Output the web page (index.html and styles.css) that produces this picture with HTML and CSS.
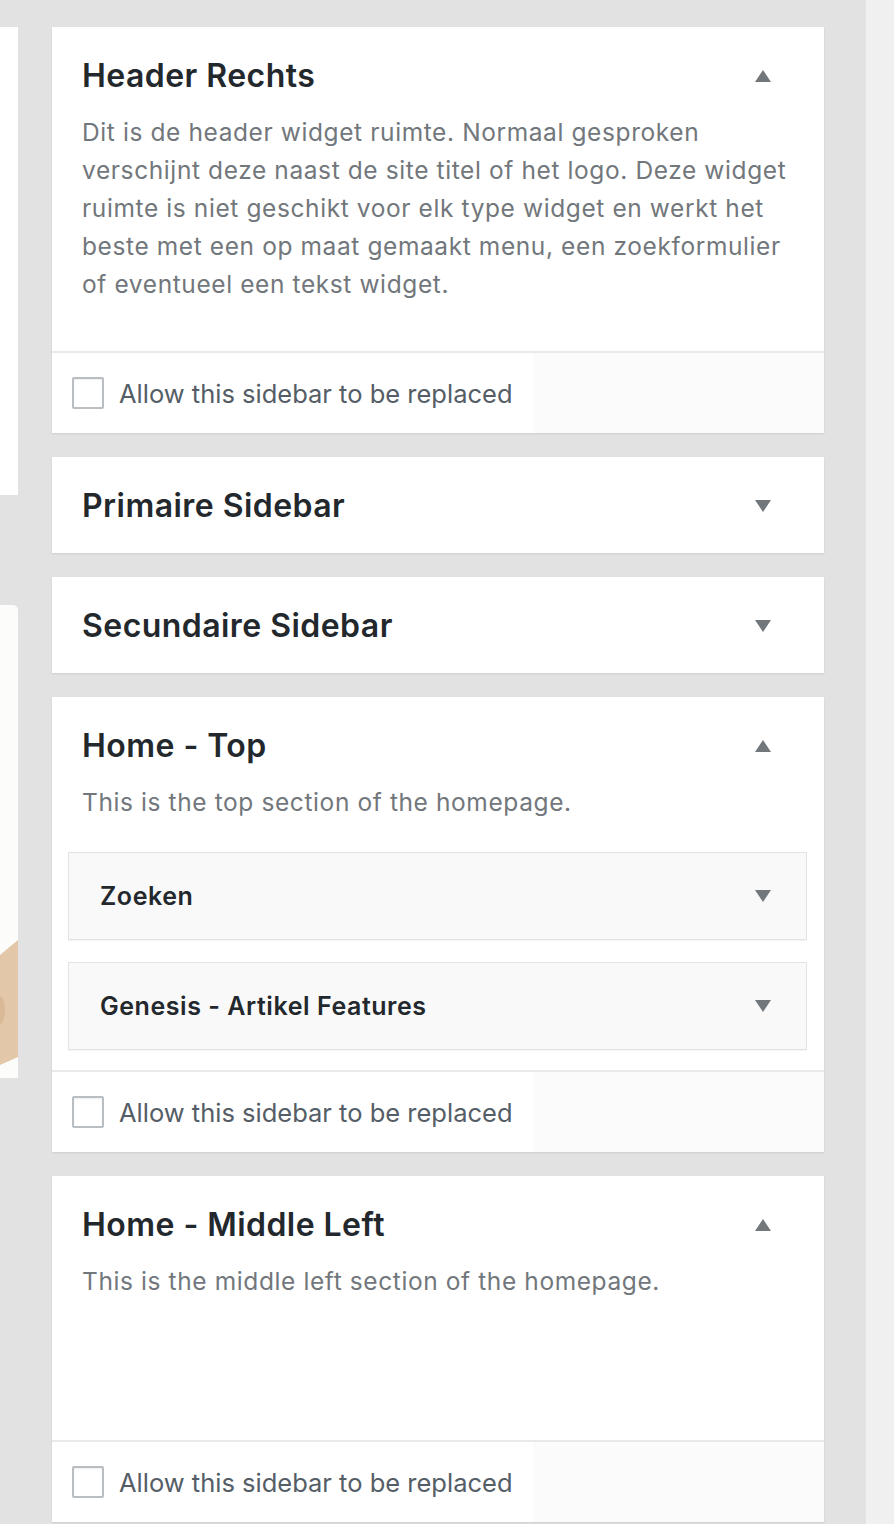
FILE: index.html
```html
<!DOCTYPE html>
<html lang="nl">
<head>
<meta charset="utf-8">
<title>Widgets</title>
<link rel="stylesheet" href="styles.css">
</head>
<body>
<div class="page">
  <aside class="left">
    <div class="lcard lcard-1"></div>
    <div class="lcard lcard-2">
      <svg class="preview" width="18" height="473" viewBox="0 0 18 473" aria-hidden="true">
        <polygon points="18,335 0,350 0,460 18,452" fill="#e2c8a8"/>
        <ellipse cx="0" cy="405" rx="5" ry="14" fill="#d9b996"/>
      </svg>
    </div>
  </aside>

  <main class="sidebars">
    <section class="sidebar">
      <div class="sb-head">
        <h2 class="sb-title">Header Rechts</h2>
        <span class="arrow arrow-up"></span>
      </div>
      <p class="sb-desc">Dit is de header widget ruimte. Normaal gesproken verschijnt deze naast de site titel of het logo. Deze widget ruimte is niet geschikt voor elk type widget en werkt het beste met een op maat gemaakt menu, een zoekformulier of eventueel een tekst widget.</p>
      <div class="sb-body sb-body-short"></div>
      <div class="sb-foot">
        <label class="replace"><span class="cb"></span>Allow this sidebar to be replaced</label>
      </div>
    </section>

    <section class="sidebar">
      <div class="sb-head sb-head-closed">
        <h2 class="sb-title">Primaire Sidebar</h2>
        <span class="arrow arrow-down"></span>
      </div>
    </section>

    <section class="sidebar">
      <div class="sb-head sb-head-closed">
        <h2 class="sb-title">Secundaire Sidebar</h2>
        <span class="arrow arrow-down"></span>
      </div>
    </section>

    <section class="sidebar">
      <div class="sb-head">
        <h2 class="sb-title">Home - Top</h2>
        <span class="arrow arrow-up"></span>
      </div>
      <p class="sb-desc">This is the top section of the homepage.</p>
      <div class="sb-body sb-body-widgets">
        <div class="widget">
          <h3 class="widget-title">Zoeken</h3>
          <span class="arrow arrow-down"></span>
        </div>
        <div class="widget">
          <h3 class="widget-title">Genesis - Artikel Features</h3>
          <span class="arrow arrow-down"></span>
        </div>
      </div>
      <div class="sb-foot">
        <label class="replace"><span class="cb"></span>Allow this sidebar to be replaced</label>
      </div>
    </section>

    <section class="sidebar">
      <div class="sb-head">
        <h2 class="sb-title">Home - Middle Left</h2>
        <span class="arrow arrow-up"></span>
      </div>
      <p class="sb-desc">This is the middle left section of the homepage.</p>
      <div class="sb-body sb-body-tall"></div>
      <div class="sb-foot">
        <label class="replace"><span class="cb"></span>Allow this sidebar to be replaced</label>
      </div>
    </section>
  </main>

  <div class="gutter"></div>
  <div class="strip"></div>
</div>
</body>
</html>
```

FILE: styles.css
```css
* { box-sizing: border-box; }

html, body {
  margin: 0;
  padding: 0;
  background: #e2e2e2;
  height: 1524px;
  overflow: hidden;
}

body {
  font-family: Inter, "Noto Sans", "DejaVu Sans", sans-serif;
}

.page {
  display: flex;
  align-items: flex-start;
  height: 1524px;
}

/* left column with theme previews */
.left {
  width: 18px;
  flex: 0 0 18px;
  display: flex;
  flex-direction: column;
  padding-top: 27px;
}

.lcard {
  background: #ffffff;
}

.lcard-1 {
  height: 468px;
}

.lcard-2 {
  margin-top: 110px;
  height: 473px;
  background: #fcfdfb;
  border-top-right-radius: 5px;
  overflow: hidden;
}

.preview {
  display: block;
}

/* main sidebar column */
.sidebars {
  width: 772px;
  flex: 0 0 772px;
  margin-left: 34px;
  padding-top: 27px;
  display: flex;
  flex-direction: column;
  gap: 24px;
}

.sidebar {
  background: #ffffff;
  box-shadow: 0 1px 2px rgba(0, 0, 0, 0.09);
}

.sb-head {
  display: flex;
  align-items: center;
  justify-content: space-between;
  padding: 31px 53px 0 30px;
}

.sb-head .arrow {
  margin-top: -1px;
}

.sb-head-closed {
  padding-bottom: 29px;
}

.sb-title {
  margin: 0;
  font-size: 32px;
  line-height: 36px;
  font-weight: 600;
  color: #23282d;
  letter-spacing: 0.45px;
}

.arrow {
  width: 0;
  height: 0;
  border-left: 8px solid transparent;
  border-right: 8px solid transparent;
  flex: 0 0 auto;
}

.arrow-up {
  border-bottom: 12px solid #72777c;
}

.arrow-down {
  border-top: 12px solid #72777c;
}

.sb-desc {
  margin: 19px 0 0;
  padding: 0 30px;
  font-size: 24.5px;
  line-height: 38px;
  letter-spacing: 0.6px;
  color: #72777c;
}

.sb-body-short {
  height: 48px;
}

.sb-body-tall {
  height: 140px;
}

.sb-body-widgets {
  padding: 31px 17px 20px 16px;
  display: flex;
  flex-direction: column;
  gap: 22px;
}

.widget {
  height: 88px;
  display: flex;
  align-items: center;
  justify-content: space-between;
  padding: 0 35px 0 31px;
  background: #f9f9f9;
  border: 1px solid #e3e3e3;
  box-shadow: 0 1px 1px rgba(0, 0, 0, 0.04);
}

.widget-title {
  margin: 0;
  font-size: 25px;
  line-height: 30px;
  font-weight: 600;
  letter-spacing: 0.55px;
  color: #23282d;
}

.sb-foot {
  border-top: 2px solid #e9e9e9;
  background: #fbfbfb;
  height: 82px;
  display: flex;
}

.replace {
  display: flex;
  align-items: center;
  gap: 15px;
  padding: 0 20px;
  background: #ffffff;
  font-size: 25.5px;
  color: #555d66;
}

.cb {
  width: 32px;
  height: 32px;
  border: 2px solid #b9bec3;
  border-radius: 2px;
  background: #ffffff;
  box-shadow: inset 0 1px 2px rgba(0, 0, 0, 0.07);
  flex: 0 0 auto;
}

/* right side */
.gutter {
  width: 42px;
  flex: 0 0 42px;
}

.strip {
  flex: 1 1 auto;
  align-self: stretch;
  background: #f0f0f0;
}
```
